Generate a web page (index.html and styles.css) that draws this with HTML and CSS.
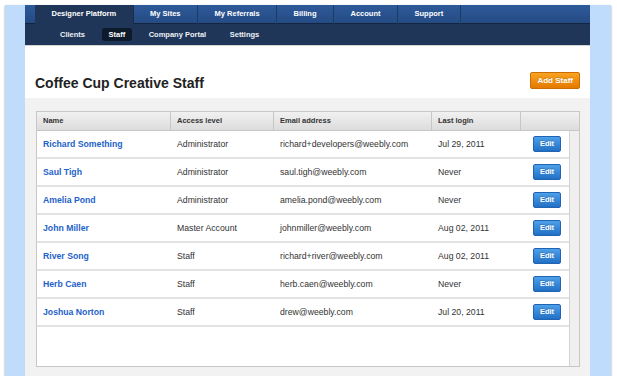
FILE: index.html
```html
<!DOCTYPE html>
<html lang="en">

<head>
    <meta charset="UTF-8">
    <meta name="viewport" content="width=device-width, initial-scale=1.0">
    <title>Staff</title>
    <link rel="stylesheet" href="styles.css">
</head>

<body>
    <div class="frame">
        <div class="page">
            <div class="topnav">
                <ul class="tabs">
                    <li class="active"><a href="#">Designer Platform</a></li>
                    <li><a href="#">My Sites</a></li>
                    <li><a href="#">My Referrals</a></li>
                    <li><a href="#">Billing</a></li>
                    <li><a href="#">Account</a></li>
                    <li><a href="#">Support</a></li>
                </ul>
            </div>
            <div class="subnav">
                <ul>
                    <li><a href="#">Clients</a></li>
                    <li class="current"><a href="#">Staff</a></li>
                    <li><a href="#">Company Portal</a></li>
                    <li><a href="#">Settings</a></li>
                </ul>
            </div>
            <div class="head">
                <h1>Coffee Cup Creative Staff</h1>
                <a href="#" class="btn-add">Add Staff</a>
            </div>
            <div class="panel">
                <div class="grid">
                    <div class="grid-head">
                        <div>Name</div>
                        <div>Access level</div>
                        <div>Email address</div>
                        <div>Last login</div>
                        <div></div>
                    </div>
                    <div class="grid-body">
                        <div class="rows">
                            <div class="row">
                                <a href="#" class="name">Richard Something</a>
                                <div>Administrator</div>
                                <div>richard+developers@weebly.com</div>
                                <div>Jul 29, 2011</div>
                                <div class="edit"><a href="#" class="btn-edit">Edit</a></div>
                            </div>
                            <div class="row">
                                <a href="#" class="name">Saul Tigh</a>
                                <div>Administrator</div>
                                <div>saul.tigh@weebly.com</div>
                                <div>Never</div>
                                <div class="edit"><a href="#" class="btn-edit">Edit</a></div>
                            </div>
                            <div class="row">
                                <a href="#" class="name">Amelia Pond</a>
                                <div>Administrator</div>
                                <div>amelia.pond@weebly.com</div>
                                <div>Never</div>
                                <div class="edit"><a href="#" class="btn-edit">Edit</a></div>
                            </div>
                            <div class="row">
                                <a href="#" class="name">John Miller</a>
                                <div>Master Account</div>
                                <div>johnmiller@weebly.com</div>
                                <div>Aug 02, 2011</div>
                                <div class="edit"><a href="#" class="btn-edit">Edit</a></div>
                            </div>
                            <div class="row">
                                <a href="#" class="name">River Song</a>
                                <div>Staff</div>
                                <div>richard+river@weebly.com</div>
                                <div>Aug 02, 2011</div>
                                <div class="edit"><a href="#" class="btn-edit">Edit</a></div>
                            </div>
                            <div class="row">
                                <a href="#" class="name">Herb Caen</a>
                                <div>Staff</div>
                                <div>herb.caen@weebly.com</div>
                                <div>Never</div>
                                <div class="edit"><a href="#" class="btn-edit">Edit</a></div>
                            </div>
                            <div class="row">
                                <a href="#" class="name">Joshua Norton</a>
                                <div>Staff</div>
                                <div>drew@weebly.com</div>
                                <div>Jul 20, 2011</div>
                                <div class="edit"><a href="#" class="btn-edit">Edit</a></div>
                            </div>
                        </div>
                        <div class="track"></div>
                    </div>
                </div>
            </div>
        </div>
    </div>
</body>

</html>
```

FILE: styles.css
```css
* {
    padding: 0;
    margin: 0;
    list-style: none;
    text-decoration: none;
    box-sizing: border-box;
}

body {
    background: #fff;
    font-family: "Liberation Sans", Arial, sans-serif;
}

.frame {
    margin: 5px 0 0 5px;
    width: 606px;
    height: 371px;
    padding: 0 21px 0 20px;
    background: #bfdcfd;
    box-shadow: 0 1px 2px rgba(0, 0, 0, .4);
}

.page {
    display: flex;
    flex-direction: column;
    height: 100%;
    background: #fff;
}

/* top tabs */
.topnav {
    height: 19px;
    padding-left: 10px;
    background: linear-gradient(#2e5a9a, #244a82);
    box-shadow: inset 0 -1px #14263f;
}

.tabs {
    display: flex;
    height: 100%;
}

.tabs li a {
    display: block;
    height: 100%;
    padding: 0 16.5px;
    line-height: 18px;
    font-size: 7.5px;
    font-weight: bold;
    color: #fff;
    border-right: 1px solid #1d3b67;
}

.tabs li.active a {
    background: #1f3658;
    border-right-color: #1a2e4c;
}

/* second level */
.subnav {
    height: 22px;
    background: #1f3658;
    border-bottom: 1px solid #d3d3d3;
}

.subnav ul {
    display: flex;
    align-items: center;
    gap: 10.5px;
    height: 100%;
    padding: 0 0 0 28.5px;
}

.subnav li a {
    display: block;
    padding: 0 6.5px;
    line-height: 13px;
    font-size: 7.5px;
    font-weight: bold;
    color: #edf1f7;
    border-radius: 3px;
}

.subnav li.current a {
    background: #0d1a2b;
    color: #fff;
}

/* title */
.head {
    display: flex;
    justify-content: space-between;
    align-items: flex-end;
    height: 52px;
    padding: 0 10px 9px;
}

.head h1 {
    margin-bottom: -3px;
    font-size: 14px;
    line-height: 17px;
    color: #222;
}

.btn-add {
    display: block;
    height: 17px;
    padding: 0 6px;
    line-height: 15px;
    font-size: 8px;
    font-weight: bold;
    color: #fff;
    background: linear-gradient(#f9a322, #e47a00);
    border: 1px solid #cb6c00;
    border-radius: 2px;
    text-shadow: 0 -1px 0 rgba(0, 0, 0, .15);
}

/* table */
.panel {
    flex: 1;
    display: flex;
    flex-direction: column;
    padding: 13px 10px 9px 11px;
    background: #f2f2f2;
}

.grid {
    flex: 1;
    display: flex;
    flex-direction: column;
    background: #fff;
    border: 1px solid #c7c7c7;
}

.grid-head,
.row {
    display: grid;
    grid-template-columns: 134px 103px 158px 89px 1fr;
}

.grid-head {
    height: 19px;
    background: linear-gradient(#f1f1f1, #dcdcdc);
    border-bottom: 1px solid #c7c7c7;
}

.grid-head div {
    padding-left: 6px;
    line-height: 18px;
    font-size: 7.5px;
    font-weight: bold;
    color: #333;
    border-right: 1px solid #c7c7c7;
}

.grid-head div:last-child {
    border-right: none;
}

.grid-body {
    flex: 1;
    display: flex;
}

.rows {
    flex: 1;
}

.track {
    width: 10px;
    background: #efefef;
    border-left: 1px solid #d3d3d3;
}

.row {
    height: 28px;
    align-items: center;
    border-bottom: 2px solid #e3e3e3;
    font-size: 8.7px;
    color: #333;
}

.row > * {
    padding-left: 6px;
}

.row .name {
    font-weight: bold;
    color: #1d62c9;
}

.row .edit {
    padding-left: 12px;
}

.btn-edit {
    display: block;
    width: 28px;
    height: 16px;
    line-height: 14px;
    text-align: center;
    font-size: 7.5px;
    font-weight: bold;
    color: #fff;
    background: linear-gradient(#4da0ea, #2270c5);
    border: 1px solid #2164b2;
    border-radius: 2px;
    text-shadow: 0 -1px 0 rgba(0, 0, 0, .2);
}
```
